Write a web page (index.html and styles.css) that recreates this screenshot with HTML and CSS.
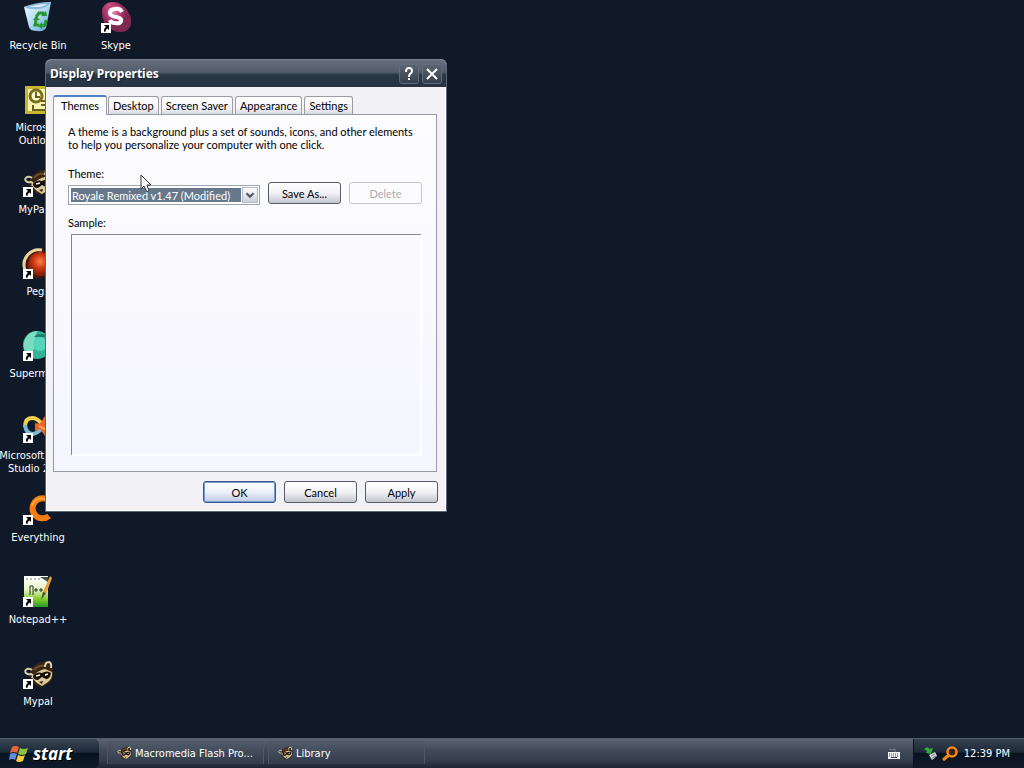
FILE: index.html
```html
<!DOCTYPE html>
<html lang="en">
<head>
<meta charset="utf-8">
<title>Desktop</title>
<link rel="stylesheet" href="styles.css">
</head>
<body>
<svg class="defs" aria-hidden="true">
  <defs>
    <symbol id="shortcut" viewBox="0 0 10 10"><path fill="#fff" d="M0 0h10v10H0z"/><path d="M3 2h5v5L6.500 5.500C5 6.500 4.500 7.500 4.500 9L3 8.500C2.500 6.500 3.500 5 5 4z" fill="#000"/></symbol>
    <symbol id="raccoon" viewBox="0 0 32 32">
      <path d="M10 10q5-5 11-6l3-1 6 4 1 9q0 7-5 10l-7 3-5-2-5-5-2-6z" fill="#3a2513"/>
      <path d="M23 9q0-5 4-5 3 1 2 6" stroke="#ded3b1" stroke-width="2" fill="none"/>
      <path d="M10 12q-2-2-5-1-3 2-1 4t5 1q3 1 1 4" stroke="#d9cba6" stroke-width="2" fill="none"/>
      <path d="M12 17q5-5 11-6l7 3q1 6-4 10l-6 4-5-3-4-4z" fill="#d8c797"/>
      <path d="M11 18q4-5 9-3 5-3 9 0-1 6-5 6l-4-2-4 3q-5 0-5-4z" fill="#160f0c"/>
      <path d="M14 18l4-1M23 17l3-1" stroke="#fff3d0" stroke-width="1.500"/>
      <path d="M12 12q4-5 10-4" stroke="#6c4d2b" stroke-width="2" fill="none"/>
      <path d="M17 24l4-1-1 3z" fill="#2a1810"/>
    </symbol>
    <linearGradient id="bin" x2="1" y2="1"><stop stop-color="#f5fcff"/><stop offset=".5" stop-color="#b4dcf3"/><stop offset="1" stop-color="#559fd2"/></linearGradient>
    <radialGradient id="plum" cx=".4" cy=".3"><stop stop-color="#ea8eb5"/><stop offset=".55" stop-color="#b43a70"/><stop offset="1" stop-color="#7c2a50"/></radialGradient>
    <radialGradient id="ball" cx=".5" cy=".4"><stop stop-color="#ff8146"/><stop offset=".6" stop-color="#c83410"/><stop offset="1" stop-color="#8a2008"/></radialGradient>
    <linearGradient id="note" x2="0" y2="1"><stop stop-color="#fff"/><stop offset=".45" stop-color="#e6f5c4"/><stop offset=".75" stop-color="#80cc28"/><stop offset="1" stop-color="#27982b"/></linearGradient>
  </defs>
</svg>
<div class="screen">
  <main class="desktop">
    <ul class="icons">
      <li><a class="icon" href="#bin"><svg class="pic" viewBox="0 0 32 32"><path d="M2 5q11-3 27-5l-5 26q-3 4-9 3-7 0-8-4z" fill="url(#bin)"/><path d="M2 5q6 3 14 2 10-1 13-7Q14 0 2 5z" fill="#8bbbd9"/><path d="M7 5q12-3 18-3-4 3-11 3z" fill="#e9f6fd"/><path d="M14 15l3-4h4l1 3M14 18l-1 5h4M20 24l3-1 1-5" fill="none" stroke="#25972c" stroke-width="3"/><path d="M19 14h6l-1-5zM11 18l3-4 4 4zM20 20v7l-4-3z" fill="#25972c"/></svg><span>Recycle Bin</span></a></li>
      <li><a class="icon" href="#outlook"><svg class="pic" viewBox="0 0 32 32"><path fill="#c4b62e" d="M3 2h27v28H3z"/><path fill="#f7f2b2" d="M6 5h21v22H6z"/><circle cx="14" cy="12" r="6" fill="#fffbd6" stroke="#7a6f1c" stroke-width="3"/><path d="M14 8v5h4M11 21v5h13M19 17h7M19 21h6" fill="none" stroke="#6a611a" stroke-width="2"/></svg><span>Microsoft<br>Outlook</span></a></li>
      <li><a class="icon" href="#mypaint"><svg class="pic"><use href="#raccoon"/></svg><svg class="arrow"><use href="#shortcut"/></svg><span>MyPaint</span></a></li>
      <li><a class="icon" href="#pegs"><svg class="pic" viewBox="0 0 32 32"><circle cx="17" cy="16" r="15" fill="#3a1a14"/><path d="M3 22A15 15 0 0 1 20 2" fill="none" stroke="#efd39a" stroke-width="3"/><circle cx="18" cy="16" r="12" fill="url(#ball)"/></svg><svg class="arrow"><use href="#shortcut"/></svg><span>Pegs</span></a></li>
      <li><a class="icon" href="#supermium"><svg class="pic" viewBox="0 0 32 32"><circle cx="15" cy="15" r="14" fill="#35b395"/><path d="M15 1a14 14 0 0 0-9 24q8-4 7-14z" fill="#7addc1"/><circle cx="18" cy="14" r="7" fill="#55d4b7"/><path d="M12 7q3-4 9-3l7 3H17z" fill="#1d7e70"/></svg><svg class="arrow"><use href="#shortcut"/></svg><span>Supermium</span></a></li>
      <li><a class="icon" href="#studio"><svg class="pic" viewBox="0 0 32 32"><path d="M3 15Q3 6 10 6q5 0 9 5" fill="none" stroke="#eed04a" stroke-width="4"/><path d="M3 13q1 9 8 9 5-1 9-6" fill="none" stroke="#79b7d2" stroke-width="4"/><path d="M13 11l5 1 5-8 8 2-4 8 4 7-8 3-5-7-5 2z" fill="#ee632b"/><path d="M23 6l6 9M17 14l10 5" stroke="#ffa154" stroke-width="2"/></svg><svg class="arrow"><use href="#shortcut"/></svg><span>Microsoft Visual<br>Studio 2005</span></a></li>
      <li><a class="icon" href="#everything"><svg class="pic" viewBox="0 0 32 32"><path d="M26 6A10 10 0 1 0 27 22" fill="none" stroke="#f57c12" stroke-width="6"/><path d="M25 6A10 10 0 0 0 10 12" fill="none" stroke="#ffa33d" stroke-width="2"/></svg><svg class="arrow"><use href="#shortcut"/></svg><span>Everything</span></a></li>
      <li><a class="icon" href="#notepad"><svg class="pic" viewBox="0 0 32 32"><path d="M2 0h24v31H2z" fill="url(#note)"/><path d="M5 2v2m4-2v2m4-2v2m4-2v2" stroke="#75818a"/><path d="M8 19v-9h3v9M12 14h4m-2-2v4m3-2h4m-2-2v4" fill="none" stroke="#25301d"/><path d="M19 24l2-8 7-16 2 2-6 16z" fill="#e0a53b"/><path d="M19 24l2-8 3 1zM18 1h8v5z" fill="#3f5148"/></svg><svg class="arrow"><use href="#shortcut"/></svg><span>Notepad++</span></a></li>
      <li><a class="icon" href="#mypal"><svg class="pic"><use href="#raccoon"/></svg><svg class="arrow"><use href="#shortcut"/></svg><span>Mypal</span></a></li>
      <li><a class="icon" href="#skype"><svg class="pic" viewBox="0 0 32 32"><rect x="2" y="0" width="22" height="22" rx="9" fill="url(#plum)"/><rect x="9" y="8" width="22" height="22" rx="9" fill="url(#plum)"/><circle cx="16" cy="15" r="13" fill="url(#plum)"/><path d="M22 10q-2-4-7-3-5 0-5 4 0 3 6 4 6 1 5 4-1 3-6 2-4 0-5-3" fill="none" stroke="#fff" stroke-width="4"/></svg><svg class="arrow"><use href="#shortcut"/></svg><span>Skype</span></a></li>
    </ul>

    <section class="window" aria-labelledby="title">
      <header class="titlebar">
        <h1 id="title">Display Properties</h1>
        <button class="cap" aria-label="Help"><svg viewBox="0 0 14 14"><path d="M4 5q0-4 3-4t3 3q0 2-2 3-1 1-1 3M7 11v2" fill="none" stroke="#fff" stroke-width="2"/></svg></button>
        <button class="cap" aria-label="Close"><svg viewBox="0 0 14 14"><path d="M2 2l10 10M12 2L2 12" fill="none" stroke="#fff" stroke-width="2"/></svg></button>
      </header>
      <div class="body">
        <div class="tabs" role="tablist">
          <button class="tab active" role="tab" aria-selected="true">Themes</button>
          <button class="tab" role="tab">Desktop</button>
          <button class="tab" role="tab">Screen Saver</button>
          <button class="tab" role="tab">Appearance</button>
          <button class="tab" role="tab">Settings</button>
        </div>
        <div class="panel" role="tabpanel">
          <p>A theme is a background plus a set of sounds, icons, and other elements<br>to help you personalize your computer with one click.</p>
          <label class="theme-label" for="theme">Theme:</label>
          <div class="row">
            <div class="combo">
              <select id="theme"><option>Royale Remixed v1.47 (Modified)</option></select>
              <svg class="drop" viewBox="0 0 16 16"><path d="M4 6l4 4 4-4" fill="none" stroke="#4d5964" stroke-width="2.500"/></svg>
            </div>
            <button class="btn">Save As...</button>
            <button class="btn" disabled>Delete</button>
          </div>
          <div class="sample-label" id="sample">Sample:</div>
          <div class="sample" aria-labelledby="sample"></div>
        </div>
        <div class="actions">
          <button class="btn default">OK</button>
          <button class="btn">Cancel</button>
          <button class="btn">Apply</button>
        </div>
      </div>
    </section>
    <svg class="cursor" viewBox="0 0 12 19"><path d="M1 1v14l3-3 3 6 2-1-2-6h4z" fill="#fff" stroke="#30353b"/></svg>
  </main>

  <footer class="taskbar">
    <button class="start">
      <svg viewBox="0 0 20 20"><path d="M3 3q3-2 7 0L8 9Q5 7 1 9z" fill="#e8663a"/><path d="M11 4q4 2 8 0l-2 6q-4 2-8 0z" fill="#8ac43f"/><path d="M1 10q4-2 7 0l-2 6q-3-2-6 0z" fill="#5b8fe0"/><path d="M9 11q4 2 7 0l-2 6q-4 2-7 0z" fill="#f5cc3c"/></svg>
      start
    </button>
    <nav class="tasks">
      <button class="task"><svg viewBox="0 0 32 32"><use href="#raccoon"/></svg>Macromedia Flash Pro...</button>
      <button class="task"><svg viewBox="0 0 32 32"><use href="#raccoon"/></svg>Library</button>
    </nav>
    <svg class="keyboard" viewBox="0 0 14 12"><path d="M2 1l3 1 3-1v3" fill="none" stroke="#7b828c"/><path d="M1 4h12v7H1z" fill="#f3f4f6"/><path d="M2 6h10M2 8h10" stroke="#3b434e" stroke-dasharray="1 1"/><path d="M4 9.500h6" stroke="#3b434e"/></svg>
    <div class="tray">
      <svg viewBox="0 0 16 16"><path d="M1 3l4-2 1 2 4-1-2 6-5-1 1-2z" fill="#39a83a"/><path d="M6 9l6-3 2 4-5 4z" fill="#d6dde0"/><path d="M8 10l4-2M9 12l4-2" stroke="#68737a"/></svg>
      <svg viewBox="0 0 16 16"><circle cx="10" cy="6" r="4.500" fill="#3a1f10" stroke="#f58a1c" stroke-width="2.500"/><path d="M7 9l-6 5" stroke="#f58a1c" stroke-width="3"/></svg>
      <time>12:39 PM</time>
    </div>
  </footer>
</div>
</body>
</html>
```
FILE: styles.css
```css
* { box-sizing: border-box; }
body {
  margin: 0;
  background: #101928;
  color: #000;
  font: 11px/13px Lato, "Liberation Sans", sans-serif;
}
button, select { font: inherit; color: inherit; }
.defs { position: absolute; width: 0; height: 0; }
.screen {
  display: flex;
  flex-direction: column;
  min-height: 100vh;
}
.desktop { position: relative; flex: 1; }

.icons {
  display: grid;
  grid-auto-flow: column;
  grid-template-rows: repeat(9, 82px);
  grid-auto-columns: 76px;
  column-gap: 2px;
  margin: 0;
  padding: 0;
  list-style: none;
}
.icon {
  position: relative;
  display: flex;
  flex-direction: column;
  align-items: center;
  gap: 5px;
  padding-top: 2px;
  color: #fff;
  font-family: "DejaVu Sans Condensed", "DejaVu Sans", sans-serif;
  text-align: center;
  text-decoration: none;
  white-space: nowrap;
}
.pic { width: 32px; height: 32px; }
.arrow {
  position: absolute;
  top: 23px;
  left: 23px;
  width: 10px;
  height: 10px;
}

.window {
  position: absolute;
  top: 59px;
  left: 45px;
  width: 402px;
  border: 1px solid #5c6674;
  border-top-color: #7b8491;
  border-radius: 6px 6px 0 0;
  background: #f1f1f6;
  box-shadow: inset -1px -1px #fff, inset 1px 0 #fff;
}
.titlebar {
  display: flex;
  align-items: center;
  gap: 3px;
  height: 27px;
  padding: 0 4px;
  border-radius: 5px 5px 0 0;
  background: linear-gradient(#666e7b, #525c69 45%, #293643 55%, #263341);
  color: #fff;
}
.titlebar h1 {
  flex: 1;
  margin: 0;
  font: bold 12px/16px "Noto Sans", "Open Sans", sans-serif;
  text-shadow: 1px 1px #1a2430;
}
.cap {
  display: grid;
  place-items: center;
  width: 20px;
  height: 20px;
  padding: 0;
  border: 1px solid #626d79;
  border-radius: 3px;
  background: linear-gradient(#596470, #34404c);
}
.cap svg { width: 14px; height: 14px; }

.body { padding: 8px 8px 8px 7px; }
.tabs {
  display: flex;
  align-items: flex-end;
  gap: 2px;
  padding-left: 1px;
}
.tab {
  height: 18px;
  padding: 0 4px;
  border: 1px solid #9a9da6;
  border-bottom: 0;
  border-radius: 3px 3px 0 0;
  background: linear-gradient(#fff, #f6f6fa 60%, #d9dae1);
  white-space: nowrap;
}
.tab.active {
  position: relative;
  z-index: 1;
  height: 20px;
  margin: 0 -1px -1px -1px;
  padding: 0 7px 2px;
  border-top: 2px solid #4f82c8;
  background: #fcfcff;
}
.panel {
  margin-right: 1px;
  padding: 10px 14px 15px;
  border: 1px solid #969aa5;
  background: linear-gradient(#fdfdff, #f5f5fd);
}
.panel p { margin: 0; white-space: nowrap; }
.theme-label { display: block; margin-top: 16px; }
.row {
  display: flex;
  align-items: flex-start;
  gap: 8px;
  margin-top: 2px;
}
.combo {
  display: flex;
  flex: 1;
  min-width: 0;
  height: 20px;
  margin-top: 3px;
  padding: 1px;
  border: 1px solid #9aa4b2;
  background: #fff;
}
.combo select {
  flex: 1;
  min-width: 0;
  margin: 1px;
  padding: 0 1px;
  border: 0;
  border-radius: 0;
  appearance: none;
  outline: 0;
  background: #66788a;
  color: #fff;
}
.drop {
  width: 16px;
  height: 16px;
  border: 1px solid #b4bac5;
  background: linear-gradient(#fff, #cbcfd8);
}
.btn {
  width: 73px;
  height: 22px;
  padding: 0;
  border: 1px solid #565b66;
  border-radius: 3px;
  background: linear-gradient(#fff, #f2f2f6 50%, #c4c6cd);
}
.btn:disabled {
  border-color: #c4c5ca;
  background: #fcfcfe;
  color: #acadb2;
}
.btn.default {
  border-color: #36568c;
  box-shadow: inset 0 0 0 1px #799bd6;
  background: linear-gradient(#fff, #eef1fb 50%, #bdc8e2);
}
.sample-label { margin-top: 11px; }
.sample {
  height: 222px;
  margin: 5px 0 0 3px;
  border: 2px solid #fff;
  border-top: 1px solid #85878f;
  border-left: 1px solid #85878f;
}
.actions {
  display: flex;
  justify-content: flex-end;
  gap: 8px;
  margin-top: 9px;
}
.cursor {
  position: absolute;
  top: 174px;
  left: 140px;
  width: 12px;
  height: 19px;
}

.taskbar {
  display: flex;
  align-items: stretch;
  height: 30px;
  border-top: 1px solid #555f6c;
  background: linear-gradient(#5b6471, #414a58 40%, #343d4c 75%, #1b2433);
  color: #fff;
  font-family: "DejaVu Sans Condensed", "DejaVu Sans", sans-serif;
}
.start {
  display: flex;
  align-items: center;
  gap: 4px;
  width: 99px;
  padding: 0 0 0 9px;
  border: 0;
  border-radius: 0 5px 5px 0;
  background: linear-gradient(#3a4654, #1c2938 45%, #081321 50%, #101b29);
  font: italic bold 17px/20px "Noto Sans", "Open Sans", sans-serif;
  text-shadow: 1px 1px #000;
}
.start svg { width: 20px; height: 20px; }
.tasks {
  display: flex;
  flex: 1;
  gap: 4px;
  padding: 2px 0 3px 8px;
}
.task {
  display: flex;
  align-items: center;
  gap: 3px;
  width: 157px;
  padding: 0 8px;
  border: 1px solid #4e5866;
  border-bottom-color: #2a3341;
  border-radius: 2px;
  background: linear-gradient(#505a68, #3c4655 60%, #323c4b);
  white-space: nowrap;
}
.task svg { width: 16px; height: 16px; }
.keyboard {
  align-self: center;
  width: 14px;
  height: 12px;
  margin-right: 12px;
}
.tray {
  display: flex;
  align-items: center;
  gap: 3px;
  padding: 0 14px 0 9px;
  border-left: 1px solid #0b1320;
  background: linear-gradient(#364250, #1d2938 45%, #091320 50%, #111b2a);
}
.tray svg { width: 16px; height: 16px; }
.tray time { margin-left: 3px; }
```
